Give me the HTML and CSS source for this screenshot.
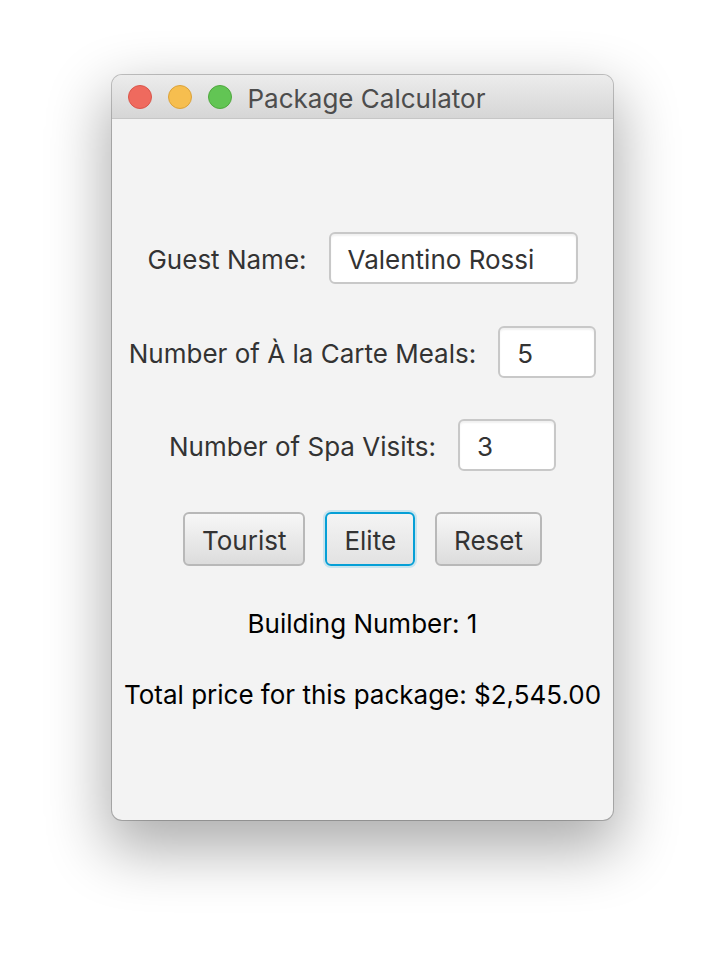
FILE: index.html
```html
<!DOCTYPE html>
<html lang="en">
<head>
<meta charset="utf-8">
<title>Package Calculator</title>
<link rel="stylesheet" href="styles.css">
</head>
<body>
<div class="window">
  <div class="titlebar">
    <div class="lights">
      <span class="light red"></span>
      <span class="light yellow"></span>
      <span class="light green"></span>
    </div>
    <div class="title">Package Calculator</div>
    <div></div>
  </div>
  <div class="content">
    <div class="row row-guest">
      <span class="label">Guest Name:</span>
      <div class="field wide">Valentino Rossi</div>
    </div>
    <div class="row row-meals">
      <span class="label">Number of À la Carte Meals:</span>
      <div class="field narrow">5</div>
    </div>
    <div class="row row-spa">
      <span class="label">Number of Spa Visits:</span>
      <div class="field narrow">3</div>
    </div>
    <div class="buttons">
      <button class="btn">Tourist</button>
      <button class="btn focused">Elite</button>
      <button class="btn">Reset</button>
    </div>
    <div class="result building">Building Number: 1</div>
    <div class="result total">Total price for this package: $2,545.00</div>
  </div>
</div>
</body>
</html>
```
FILE: styles.css
```css
html, body {
  margin: 0;
  padding: 0;
  background: #ffffff;
}
body {
  width: 724px;
  height: 968px;
  padding: 75px 0 0 112px;
  box-sizing: border-box;
  font-family: Inter, "Liberation Sans", sans-serif;
}
.window {
  width: 501px;
  height: 745px;
  border-radius: 10px;
  overflow: hidden;
  background: #f3f3f3;
  box-shadow: 0 0 0 1px rgba(0,0,0,0.22), 0 24px 60px 6px rgba(0,0,0,0.32);
  display: flex;
  flex-direction: column;
}
.titlebar {
  height: 43px;
  flex: none;
  background: linear-gradient(#ececec, #d6d6d6);
  border-bottom: 1px solid #c6c6c6;
  display: grid;
  grid-template-columns: 1fr auto 1fr;
  align-items: center;
}
.lights {
  display: flex;
  gap: 16px;
  padding-left: 16px;
}
.light {
  width: 22px;
  height: 22px;
  border-radius: 50%;
  display: block;
}
.red { background: #ef6a5e; border: 1px solid #d9564b; }
.yellow { background: #f6be4f; border: 1px solid #dba23a; }
.green { background: #62c554; border: 1px solid #50a73f; }
.title {
  font-size: 26px;
  color: #4d4d4d;
  padding-left: 8px;
  padding-top: 3px;
}
.content {
  flex: 1;
  display: flex;
  flex-direction: column;
  align-items: center;
  padding-top: 113px;
  font-size: 26px;
  color: #333333;
}
.row {
  display: flex;
  align-items: center;
  gap: 22px;
  height: 52px;
}
.label { padding-top: 2px; }
.row-meals { margin-top: 42px; }
.row-spa { margin-top: 41px; }
.field {
  height: 52px;
  box-sizing: border-box;
  background: #ffffff;
  border: 2px solid #c8c8c8;
  border-radius: 6px;
  box-shadow: inset 0 2px 2px rgba(0,0,0,0.06);
  display: flex;
  align-items: center;
  padding: 2px 0 0 17px;
  color: #333333;
}
.wide { width: 249px; }
.narrow { width: 98px; }
.buttons {
  margin-top: 41px;
  display: flex;
  gap: 20px;
}
.btn {
  height: 54px;
  padding: 3px 17px 0;
  font-family: inherit;
  font-size: 26px;
  color: #333333;
  background: linear-gradient(#f7f7f7, #dcdcdc);
  border: 2px solid #b8b8b8;
  border-radius: 6px;
}
.btn.focused {
  border-color: #059fd6;
  background: linear-gradient(#f4f4f4, #e2e2e2);
  box-shadow: 0 0 0 2px rgba(5,159,214,0.18);
}
.result {
  color: #000000;
  height: 30px;
  line-height: 30px;
}
.building { margin-top: 43px; }
.total { margin-top: 41px; }
```
